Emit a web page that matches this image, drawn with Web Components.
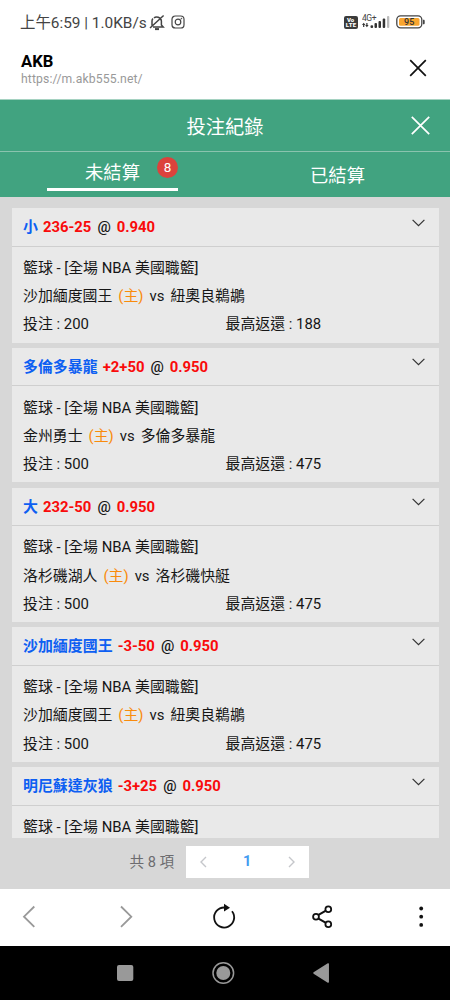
<!DOCTYPE html>
<html lang="zh-Hant">
<head>
<meta charset="utf-8">
<title>AKB</title>
<style>
html,body{margin:0;height:1000px;overflow:hidden}
body{font-family:Roboto,"Noto Sans CJK TC",sans-serif}
</style>
</head>
<body>
<bet-app></bet-app>
<script>
const define = (name, html, setup) => {
  const t = document.createElement('template');
  t.innerHTML = '<style>*{box-sizing:border-box}svg{display:block}</style>' + html;
  customElements.define(name, class extends HTMLElement {
    constructor() {
      super();
      this.attachShadow({mode: 'open'}).append(t.content.cloneNode(true));
    }
    connectedCallback() { if (setup) setup(this, this.shadowRoot); }
  });
};

define('status-bar', `
<style>
:host{display:flex;height:44px;padding:0 25px 0 20px;align-items:center;justify-content:space-between;color:#444}
.l,.r{display:flex;align-items:center}
.t{font-size:15.4px;line-height:20px;white-space:pre;padding-top:1px}
.volte{width:14px;height:13px;margin-right:4px}
</style>
<div class="l"><span class="t">上午6:59 | 1.0KB/s</span>
<svg width="16" height="17" viewBox="0 0 16 17" style="margin-left:2px" fill="none" stroke="#444" stroke-width="1.5"><path d="M5 4C7 2 12 3 12.4 7V11L14.2 13H4M3 11.5V7Q3 5.5 4 4.5M14.6 1.5L1 14"/><path d="M6 15.1H10" stroke-width="2"/></svg>
<svg width="14" height="14" viewBox="0 0 14 14" style="margin-left:6px" fill="none" stroke="#444" stroke-width="1.2"><rect x="1" y="1" width="12" height="12" rx="3.3"/><circle cx="7" cy="7" r="2.8"/><circle cx="10.4" cy="3.6" r=".5" fill="#444" stroke-width=".5"/></svg></div>
<div class="r">
<svg class="volte" viewBox="0 0 14 13"><rect width="14" height="13" rx="2" fill="#3b3b3b"/><g fill="#fff" font-family="Roboto,sans-serif" font-weight="900" font-size="6"><text x="3" y="5.9">Vo</text><text x="1.8" y="11.3" textLength="10.4">LTE</text></g></svg>
<svg width="28" height="16" viewBox="0 0 28 16"><text x="0" y="7.3" font-family="Roboto,sans-serif" font-size="8.5" fill="#444" textLength="14.5">4G+</text><g fill="#333"><path d="M0 11L1.7 8.8L3.4 11H2.3V13H1.1V11ZM3.2 11H4.3V9H5.5V11H6.6L4.9 13.3Z"/><rect x="8.5" y="11.2" width="2.6" height="2.8" rx="1"/><rect x="12.5" y="9" width="2.5" height="5" rx="1"/><rect x="16.5" y="7" width="2.5" height="7" rx="1"/><rect x="20.7" y="4.5" width="2.5" height="9.5" rx="1"/></g><rect x="25" y="2" width="2.3" height="12" rx="1" fill="#bbb"/></svg>
<svg width="29" height="14" viewBox="0 0 29 14" style="margin-left:6px"><rect x=".8" y=".8" width="25" height="12" rx="3.8" fill="#fff" stroke="#444" stroke-width="1.3"/><rect x="3" y="3" width="20.5" height="7.7" rx="1.5" fill="#f9a52e"/><path d="M27 4.8H28Q28.7 4.8 28.7 6V8Q28.7 9.2 28 9.2H27Z" fill="#444"/><text x="13.2" y="10.1" text-anchor="middle" font-family="Roboto,sans-serif" font-weight="500" font-size="9" fill="#333">95</text></svg>
</div>`);

define('site-bar', `
<style>
:host{display:flex;height:55px;padding:7.5px 23px 0 21px;justify-content:space-between}
b{display:block;font-size:16.6px;line-height:20px;color:#000}
small{display:block;font-size:12.2px;line-height:15px;color:#999;letter-spacing:.13px}
svg{margin-top:7.5px}
</style>
<div><b>AKB</b><small>https://m.akb555.net/</small></div>
<svg width="18" height="18" viewBox="0 0 18 18"><path d="M1.2 1.2L16.8 16.8M16.8 1.2L1.2 16.8" stroke="#111" stroke-width="1.7"/></svg>`);

define('page-head', `
<style>
:host{display:block;background:#41a380;color:#fff;height:98px;border-top:1px solid #a5d2c1}
.h{height:52px;display:grid;grid-template-columns:50px 1fr 50px;align-items:center;justify-items:center;border-bottom:1px solid #8ac3ae;font-size:19.3px}
.h svg{margin-right:9px}
.tabs{display:grid;grid-template-columns:1fr 1fr;height:45px}
.tab{display:flex;justify-content:center;font-size:18.3px;line-height:26px}
.a{position:relative;width:131px;margin-left:47px;height:38.5px;border-bottom:3.5px solid #fff;padding-top:8px}
.b{padding-top:11px}
i{position:absolute;right:0;top:5px;width:21px;height:21px;border-radius:50%;background:#dc423c;font:13.5px/20px Roboto,sans-serif;text-align:center}
</style>
<div class="h"><span></span><span>投注紀錄</span><svg width="19" height="19" viewBox="0 0 19 19"><path d="M.8 .8L18.2 18.2M18.2 .8L.8 18.2" stroke="#fff" stroke-width="1.7"/></svg></div>
<div class="tabs"><div class="tab a">未結算<i>8</i></div><div class="tab b">已結算</div></div>`);

define('bet-card', `
<style>
:host{display:block;background:#e9e9e9;height:134.6px;flex:none;font-size:14.9px;color:#161616}
.h{display:flex;justify-content:space-between;height:38.6px;border-bottom:1px solid #cfcfcf;padding:0 14px 0 11.5px}
.n{font-weight:700;line-height:39px;color:#f90b0b;white-space:pre;font-size:14.85px}
.n .p{color:#0d5ff2;font-size:14.95px;margin-right:5px}.n .at{color:#161616;font-weight:500;margin:0 6px}
.h svg{margin-top:10.5px}
.b{padding:7.2px 11.5px 0}
.row{height:28.2px;line-height:28.2px;white-space:pre}
::slotted(em){font-style:normal;color:#f98b0c;margin:0 6px}
::slotted(i){font-style:normal;margin-right:6px}
.m{display:grid;grid-template-columns:202.5px 1fr}
</style>
<div class="h"><span class="n"><span class="p"></span><span class="o"></span><span class="at">@</span><span class="r"></span></span>
<svg width="13" height="8" viewBox="0 0 13 8"><path d="M.6 .8L6.5 6.7L12.4 .8" fill="none" stroke="#333" stroke-width="1.2"/></svg></div>
<div class="b"><div class="row">籃球 - [全場 NBA 美國職籃]</div><div class="row x"><slot></slot></div><div class="row m x"><span class="s"></span><span class="w"></span></div></div>`,
(host, r) => {
  const set = (q, v) => r.querySelector(q).textContent = v;
  set('.p', host.getAttribute('pick'));
  set('.o', host.getAttribute('line'));
  set('.r', host.getAttribute('odds'));
  if (host.hasAttribute('stake')) {
    set('.s', '投注 : ' + host.getAttribute('stake'));
    set('.w', '最高返還 : ' + host.getAttribute('win'));
  } else r.querySelectorAll('.x').forEach(e => e.remove());
});

define('bet-list', `
<style>:host{display:flex;flex-direction:column;gap:5.2px;height:640.5px;padding:11px 11px 0 11.5px;overflow:hidden}</style><slot></slot>`);

define('page-nav', `
<style>
:host{display:flex;height:51px;padding:8.5px 0 0 129.5px;font-size:14.6px;color:#6c6c6f;line-height:32px}
.c{display:grid;grid-template-columns:34px 1fr 34px;align-items:center;justify-items:center;width:122.5px;height:32px;background:#fff;margin-left:11px}
b{color:#429bf0;font-size:14.5px}
span{width:45.5px;white-space:nowrap}
</style>
<span>共 8 項</span><div class="c">
<svg width="7" height="12" viewBox="0 0 7 12"><path d="M6 1L1 6L6 11" fill="none" stroke="#c5c7cb" stroke-width="1.4"/></svg><b>1</b>
<svg width="7" height="12" viewBox="0 0 7 12"><path d="M1 1L6 6L1 11" fill="none" stroke="#c5c7cb" stroke-width="1.4"/></svg></div>`);

define('browser-bar', `
<style>:host{display:block;height:57.5px;background:#fff}</style>
<svg width="450" height="57.5" viewBox="0 888.5 450 57.5" fill="none" stroke="#111" stroke-width="2">
<path d="M34.3 906L24 916.2L34.3 926.4M121 906L131.3 916.2L121 926.4" stroke="#999" stroke-width="1.8"/>
<path d="M224.6 907A10 10 0 1 0 232 910.8" stroke-width="1.8"/><path d="M224 903.3L230 907.2L224 911Z" fill="#111" stroke="none"/>
<path d="M325.5 910.3L318.5 914.4M318.5 918.2L325.5 922.1"/><g stroke-width="1.8"><circle cx="328.3" cy="908.8" r="2.9"/><circle cx="316" cy="916.3" r="2.9"/><circle cx="328.3" cy="923.7" r="2.9"/></g>
<g fill="#111" stroke="none"><circle cx="421.2" cy="908" r="1.9"/><circle cx="421.2" cy="916.2" r="1.9"/><circle cx="421.2" cy="924.4" r="1.9"/></g></svg>`);

define('system-bar', `
<style>:host{display:block;height:54px;background:#000}</style>
<svg width="450" height="54" viewBox="0 946 450 54" fill="#999">
<rect x="117" y="965" width="16.3" height="16" rx="2"/><circle cx="223.3" cy="973" r="7"/><circle cx="223.3" cy="973" r="10.3" fill="none" stroke="#999" stroke-width="1.5"/>
<path d="M314 973L328.2 964V982Z" stroke="#999" stroke-width="1.5" stroke-linejoin="round"/></svg>`);

define('bet-app', `
<style>:host{display:flex;flex-direction:column;width:450px;height:1000px;background:#fff}
main{background:#d7d7d7;height:691.5px}</style>
<status-bar></status-bar><site-bar></site-bar><page-head></page-head>
<main><bet-list>
<bet-card pick="小" line="236-25" odds="0.940" stake="200" win="188">沙加緬度國王<em>(主)</em><i>vs</i>紐奧良鵜鶘</bet-card>
<bet-card pick="多倫多暴龍" line="+2+50" odds="0.950" stake="500" win="475">金州勇士<em>(主)</em><i>vs</i>多倫多暴龍</bet-card>
<bet-card pick="大" line="232-50" odds="0.950" stake="500" win="475">洛杉磯湖人<em>(主)</em><i>vs</i>洛杉磯快艇</bet-card>
<bet-card pick="沙加緬度國王" line="-3-50" odds="0.950" stake="500" win="475">沙加緬度國王<em>(主)</em><i>vs</i>紐奧良鵜鶘</bet-card>
<bet-card pick="明尼蘇達灰狼" line="-3+25" odds="0.950"></bet-card>
</bet-list><page-nav></page-nav></main>
<browser-bar></browser-bar><system-bar></system-bar>`);
</script>
</body>
</html>
